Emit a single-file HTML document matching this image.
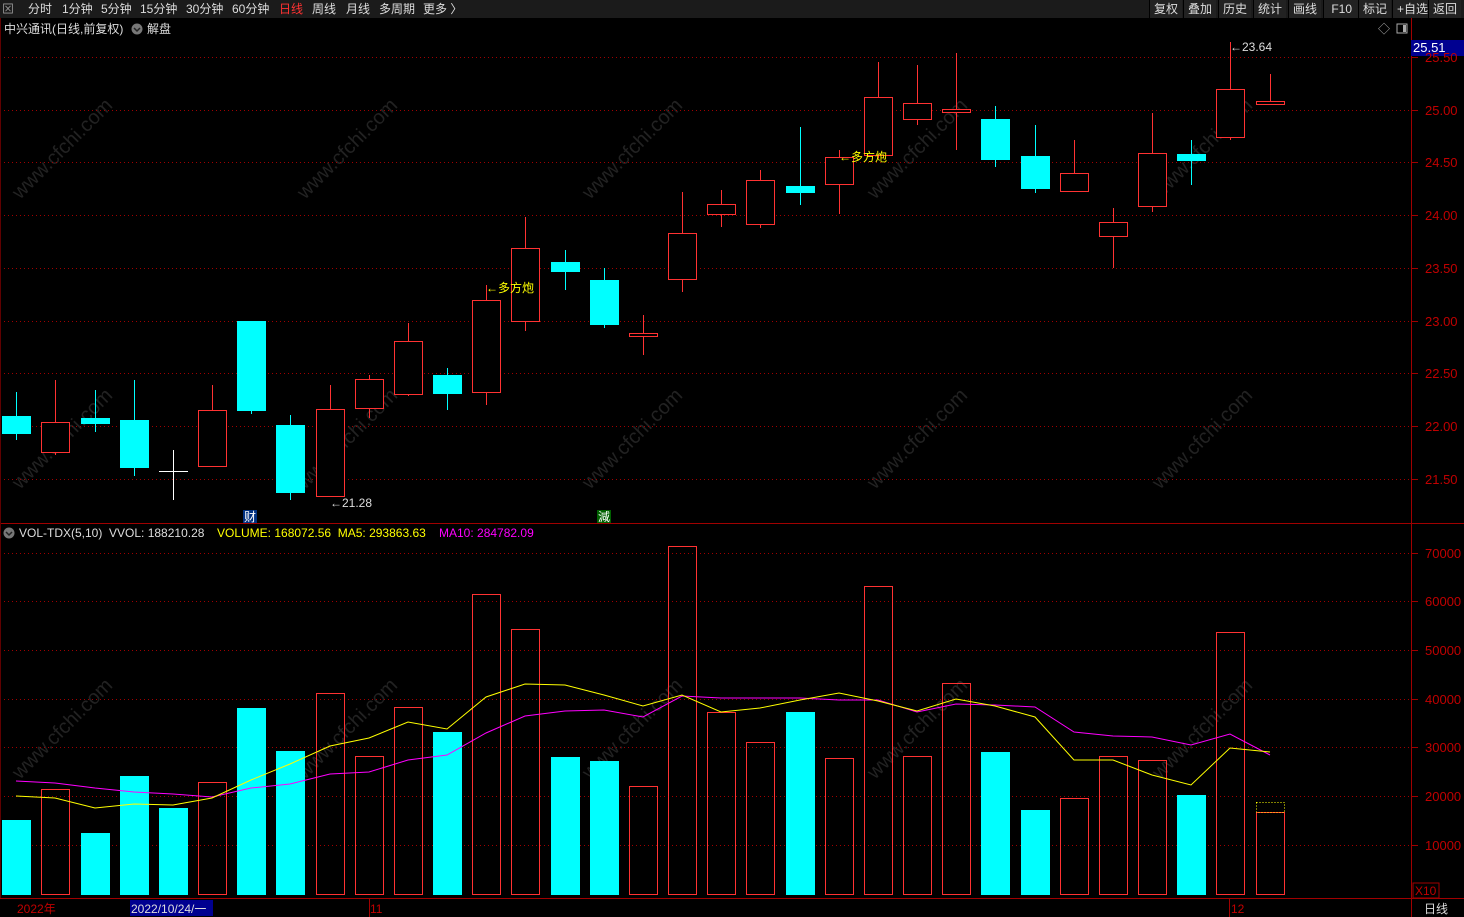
<!DOCTYPE html>
<html><head><meta charset="utf-8"><style>
body{margin:0;width:1464px;height:917px;background:#000;overflow:hidden;font-family:"Liberation Sans","Noto Sans CJK SC",sans-serif;}
#top{position:absolute;left:0;top:0;width:1464px;height:18px;background:#1b1b1b;color:#ddd;font-size:12px;line-height:18px;}
#top span{position:absolute;top:0}
.rb{position:absolute;top:0;height:18px;border-left:1px solid #000;padding:0 4px;background:#222}
svg{position:absolute;left:0;top:0}
</style></head><body>
<div id="top">
<span style="left:2px;color:#999">⊠</span>
<span style="left:28px">分时</span><span style="left:62px">1分钟</span><span style="left:101px">5分钟</span><span style="left:140px">15分钟</span><span style="left:186px">30分钟</span><span style="left:232px">60分钟</span><span style="left:279px;color:#ff3232">日线</span><span style="left:312px">周线</span><span style="left:346px">月线</span><span style="left:379px">多周期</span><span style="left:423px">更多 〉</span>
<span class="rb" style="left:1149px">复权</span><span class="rb" style="left:1183px">叠加</span><span class="rb" style="left:1218px">历史</span><span class="rb" style="left:1253px">统计</span><span class="rb" style="left:1288px">画线</span><span class="rb" style="left:1323px">&nbsp;F10&nbsp;</span><span class="rb" style="left:1358px">标记</span><span class="rb" style="left:1392px">+自选</span><span class="rb" style="left:1428px">返回</span>
</div>
<svg id="s" width="1464" height="917" font-family="Liberation Sans, Noto Sans CJK SC, sans-serif" font-size="12">
<g id="wm" fill="#222" font-size="20"></g>
<g id="grid"></g>
<line x1="0" y1="523.5" x2="1464" y2="523.5" stroke="#a00000"/>
<line x1="1411.5" y1="18" x2="1411.5" y2="917" stroke="#a00000"/>
<line x1="0" y1="898.5" x2="1464" y2="898.5" stroke="#a00000"/>
<line x1="0.5" y1="18" x2="0.5" y2="898" stroke="#600000"/>
<g id="c"></g>
<g id="v"></g>
<text x="4" y="33" fill="#ddd">中兴通讯(日线,前复权)</text>
<circle cx="137" cy="29" r="5.5" fill="#777"/><path d="M134 28l3 3 3-3" stroke="#222" fill="none" stroke-width="1.5"/>
<text x="147" y="33" fill="#ddd">解盘</text>
<text x="1378" y="33" fill="#aaa" font-size="12">◇</text>
<rect x="1397" y="24" width="10" height="9" fill="none" stroke="#aaa"/><rect x="1403" y="25" width="3" height="7" fill="#aaa"/>
<circle cx="9" cy="533" r="5.5" fill="#777"/><path d="M6 532l3 3 3-3" stroke="#222" fill="none" stroke-width="1.5"/>
<text x="19" y="537" fill="#ddd">VOL-TDX(5,10)&#160; VVOL: 188210.28</text>
<text x="217" y="537" fill="#ffff00">VOLUME: 168072.56&#160; MA5: 293863.63</text>
<text x="439" y="537" fill="#ff00ff">MA10: 284782.09</text>
<text x="486" y="292" fill="#ffff00">←多方炮</text>
<text x="839" y="161" fill="#ffff00">←多方炮</text>
<text x="330" y="507" fill="#ddd">←21.28</text>
<text x="1230" y="51" fill="#ddd">←23.64</text>
<rect x="243" y="510" width="14" height="13" fill="#003080"/><text x="244" y="521" fill="#fff">财</text>
<rect x="597" y="510" width="14" height="13" fill="#006000"/><text x="598" y="521" fill="#fff">減</text>
<rect x="1411" y="40" width="53" height="16" fill="#000090"/><text x="1413" y="52" fill="#fff" font-size="13">25.51</text>
<g id="ax" fill="#c00000" font-size="13"></g>
<rect x="1413" y="883" width="26" height="15" fill="none" stroke="#a00000"/><text x="1415" y="895" fill="#c00000">X10</text>
<rect x="130" y="900" width="83" height="16" fill="#000090"/><text x="131" y="913" fill="#ddd">2022/10/24/一</text>
<text x="17" y="913" fill="#c00000">2022年</text>
<line x1="369.5" y1="899" x2="369.5" y2="917" stroke="#a00000"/><text x="370" y="913" fill="#c00000">11</text>
<line x1="1229.5" y1="899" x2="1229.5" y2="917" stroke="#a00000"/><text x="1231" y="913" fill="#c00000">12</text>
<text x="1424" y="913" fill="#ddd">日线</text>
</svg>
<script>
const ns="http://www.w3.org/2000/svg";
function el(g,t,a){const e=document.createElementNS(ns,t);for(const k in a)e.setAttribute(k,a[k]);document.getElementById(g).appendChild(e);return e;}
const R="#ff3232",C="#00ffff";
[[57,"25.50"],[110,"25.00"],[162,"24.50"],[215,"24.00"],[268,"23.50"],[321,"23.00"],[373,"22.50"],[426,"22.00"],[479,"21.50"],
 [553,"70000"],[601,"60000"],[650,"50000"],[699,"40000"],[747,"30000"],[796,"20000"],[845,"10000"]].forEach(([y,t])=>{
 el("grid","line",{x1:0,y1:y+.5,x2:1411,y2:y+.5,stroke:"#a00000","stroke-dasharray":"1,3"});
 el("grid","line",{x1:1411,y1:y+.5,x2:1418,y2:y+.5,stroke:"#a00000"});
 const e=el("ax","text",{x:t.length>5?1422:1425,y:y+5});e.textContent=t;});
const K=[[16,392,416,434,440,C],[55,380,422,452,455,R],[95,390,418,424,432,C],[134,380,420,468,476,C],[173,450,471,471,500,"#fff"],
[212,385,410,466,466,R],[251,321,321,411,414,C],[290,415,425,493,500,C],[330,385,409,496,496,R],[369,375,379,408,418,R],
[408,323,341,394,396,R],[447,368,375,394,410,C],[486,285,300,392,405,R],[525,217,248,321,331,R],[565,250,262,272,290,C],
[604,268,280,325,328,C],[643,315,333,336,355,R],[682,192,233,279,292,R],[721,190,204,214,227,R],[760,170,180,224,228,R],
[800,127,186,193,205,C],[839,150,157,184,214,R],[878,62,97,155,158,R],[917,65,103,119,125,R],[956,53,109,112,150,R],
[995,106,119,160,167,C],[1035,125,156,189,193,C],[1074,140,173,191,191,R],[1113,208,222,236,268,R],[1152,113,153,206,212,R],
[1191,140,154,161,185,C],[1230,42,89,137,140,R],[1270,74,101,104,104,R]];
K.forEach(([x,h,t,b,l,c])=>{
 el("c","line",{x1:x+.5,y1:h,x2:x+.5,y2:l,stroke:c});
 if(c=="#fff"){el("c","line",{x1:x-14,y1:t+.5,x2:x+15,y2:t+.5,stroke:c});return;}
 if(c==C) el("c","rect",{x:x-14,y:t,width:29,height:Math.max(b-t,2),fill:C});
 else el("c","rect",{x:x-13.5,y:t+.5,width:28,height:Math.max(b-t,2),fill:"#000",stroke:R});
});
const V=[820,789,833,776,808,782,708,751,693,756,707,732,594,629,757,761,786,546,712,742,712,758,586,756,683,752,810,798,756,760,795,632,812];
V.forEach((t,i)=>{const x=K[i][0];const c=K[i][5];
 if(c==R) el("v","rect",{x:x-13.5,y:t+.5,width:28,height:894-t,fill:"none",stroke:R});
 else el("v","rect",{x:x-14,y:t,width:29,height:895-t,fill:C});});
el("v","rect",{x:1256.5,y:802.5,width:28,height:10,fill:"none",stroke:"#ffff00","stroke-dasharray":"1,2"});
const Y=[796,798,808,804,805,798,780,764,746,738,722,729,697,684,685,695,706,695,712,708,700,693,701,711,699,706,717,760,760,775,785,748,752];
const M=[781,783,788,792,794,797,788,784,774,772,760,755,733,716,711,710,717,696,698,698,698,700,700,712,704,705,707,732,736,737,745,734,755];
el("v","polyline",{points:M.map((y,i)=>K[i][0]+","+y).join(" "),fill:"none",stroke:"#ff00ff"});
el("v","polyline",{points:Y.map((y,i)=>K[i][0]+","+y).join(" "),fill:"none",stroke:"#ffff00"});
for(let i=0;i<5;i++)for(let j=0;j<3;j++){const x=20+i*285,y=200+j*290;
 const e=el("wm","text",{x:x,y:y,transform:`rotate(-45 ${x} ${y})`});e.textContent="www.cfchi.com";}
</script>
</body></html>
